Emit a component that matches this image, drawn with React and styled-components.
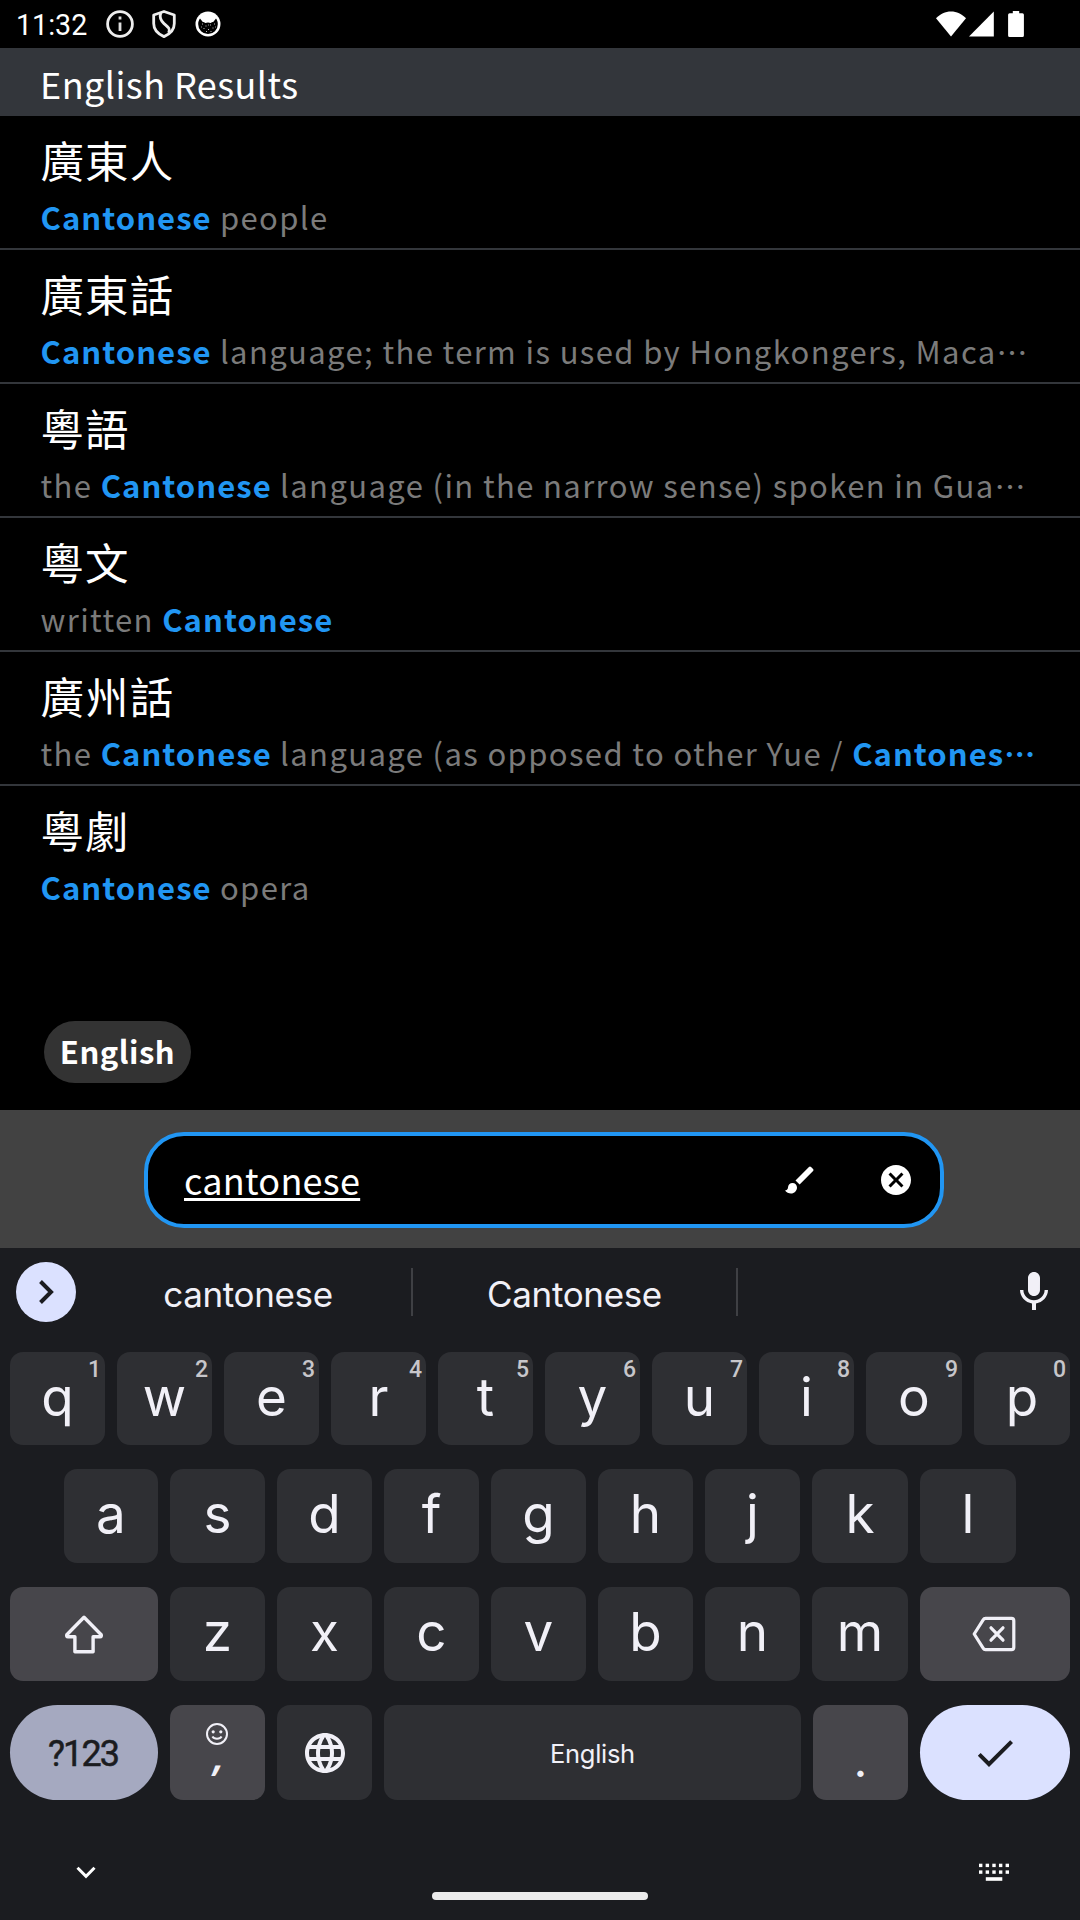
import React from "react";
import styled, { createGlobalStyle, css } from "styled-components";
import { MdBrush, MdCancel, MdLanguage, MdCheck, MdMic } from "react-icons/md";

const cjk = `"Noto Sans CJK TC", "Noto Sans", sans-serif`;
const latin = `Inter, Roboto, sans-serif`;

const color = {
  accent: "#2196f3",
  header: "#33363b",
  muted: "#7b7b7b",
  bar: "#424242",
  board: "#1b1c20",
  key: "#2e2f33",
  keyAlt: "#47464b",
  keyDim: "#a5a9c0",
  keyBright: "#dbe1ff",
  ink: "#f1f0f7",
};

const GlobalStyle = createGlobalStyle`
  * { box-sizing: border-box; }
  body { margin: 0; background: #000; }
`;

const Screen = styled.main`
  display: flex;
  flex-direction: column;
  width: 1080px;
  height: 1920px;
  overflow: hidden;
  background: #000;
  color: #fff;
  font-family: ${cjk};
`;

/* ---------- status bar ---------- */

const StatusBar = styled.header`
  display: flex;
  align-items: center;
  justify-content: space-between;
  height: 48px;
  padding: 0 56px 0 16px;
`;

const StatusGroup = styled.div`
  display: flex;
  align-items: center;
`;

const Clock = styled.time`
  padding-top: 2px;
  margin-right: 19px;
  font: 400 28.6px/32px Roboto, sans-serif;
`;

const StatusIcon = styled.svg`
  display: block;
  width: ${(p) => p.$w}px;
  height: ${(p) => p.$h}px;
  margin-right: ${(p) => p.$gap || 0}px;
`;

/* ---------- results ---------- */

const SectionHeader = styled.h1`
  display: flex;
  align-items: center;
  height: 68px;
  margin: 0;
  padding: 1px 40px 0;
  background: ${color.header};
  font-size: 36px;
  font-weight: 400;
  letter-spacing: 0.45px;
`;

const Results = styled.ul`
  flex: 1;
  margin: 0;
  padding: 0;
  list-style: none;
`;

const Result = styled.li`
  height: 134px;
  padding: 11px 0 0 40.5px;
  border-bottom: 2px solid ${color.header};
  white-space: nowrap;

  &:last-child {
    border-bottom-color: transparent;
  }
`;

const Headword = styled.div`
  font-size: 43.5px;
  line-height: 65px;
  letter-spacing: 1.1px;
`;

const Definition = styled.div`
  margin-top: 2px;
  color: ${color.muted};
  font-size: 31px;
  line-height: 46px;
  letter-spacing: 1.38px;
`;

const Match = styled.b`
  color: ${color.accent};
  font-weight: 700;
  letter-spacing: 1.05px;
`;

const Filters = styled.div`
  display: flex;
  padding: 0 44px 27px;
`;

const Chip = styled.span`
  display: flex;
  align-items: center;
  justify-content: center;
  width: 147px;
  height: 62px;
  padding-bottom: 4px;
  border-radius: 31px;
  background: #333;
  font-size: 31px;
  font-weight: 700;
  letter-spacing: 0.5px;
`;

/* ---------- search ---------- */

const SearchBar = styled.div`
  display: flex;
  height: 138px;
  padding: 22px 136px 20px 144px;
  background: ${color.bar};
`;

const SearchField = styled.div`
  display: flex;
  align-items: center;
  flex: 1;
  padding: 0 26px 0 36px;
  border: 4px solid ${color.accent};
  border-radius: 40px;
  background: #000;
`;

const Query = styled.span`
  flex: 1;
  padding-bottom: 3px;
  font-size: 36px;
  letter-spacing: 0.27px;
`;

const Composing = styled.span`
  text-decoration: underline;
  text-decoration-thickness: 3px;
  text-underline-offset: 3px;
  text-decoration-skip-ink: none;
`;

const FieldActions = styled.div`
  display: flex;
  gap: 60px;
  font-size: 36px;

  svg { display: block; }
`;

/* ---------- keyboard ---------- */

const Keyboard = styled.section`
  display: flex;
  flex-direction: column;
  height: 672px;
  background: ${color.board};
  color: ${color.ink};
  font-family: ${latin};
`;

const SuggestionStrip = styled.div`
  display: grid;
  grid-template-columns: 69px 328px 325px 1fr 48px;
  align-items: center;
  height: 88px;
  padding: 0 22px 0 16px;
`;

const ExpandButton = styled.div`
  display: flex;
  align-items: center;
  justify-content: center;
  width: 60px;
  height: 60px;
  border-radius: 50%;
  background: ${color.keyBright};
`;

const Suggestion = styled.div`
  height: 48px;
  border-right: 2px solid #3f4044;
  padding-top: 1px;
  font-size: 35px;
  line-height: 50px;
  letter-spacing: -0.35px;
  text-align: center;
`;

const MicSlot = styled.div`
  grid-column: 5;
  font-size: 48px;

  svg { display: block; }
`;

const Rows = styled.div`
  display: flex;
  flex-direction: column;
  gap: 24px;
  padding: 16px 10px 0;
`;

const Row = styled.div`
  display: flex;
  gap: 12px;
  height: ${(p) => p.$h}px;
  padding: 0 ${(p) => p.$inset || 0}px;
`;

const tones = {
  normal: css`background: ${color.key};`,
  alt: css`background: ${color.keyAlt};`,
  dim: css`background: ${color.keyDim}; color: #1b1c20;`,
  bright: css`background: ${color.keyBright}; color: #1b1c20;`,
};

const Key = styled.div`
  position: relative;
  display: flex;
  align-items: ${(p) => (p.$letter ? "flex-start" : "center")};
  justify-content: center;
  ${(p) => (p.$width ? `flex: 0 0 ${p.$width}px;` : "flex: 1 1 0;")}
  padding-top: ${(p) => (p.$letter ? 13 : 0)}px;
  border-radius: ${(p) => (p.$pill ? 48 : 13)}px;
  font-size: 53px;
  line-height: 64px;
  ${(p) => tones[p.$tone || "normal"]}

  svg { display: block; }
`;

const Hint = styled.sup`
  position: absolute;
  top: 5px;
  right: 4px;
  color: #c7c6ca;
  font: 500 23px/26px Roboto, sans-serif;
`;

const ModeLabel = styled.span`
  padding: 3px 2px 0 0;
  font: 400 36px/44px Roboto, sans-serif;
  letter-spacing: -1.9px;
  -webkit-text-stroke: 0.5px currentColor;
`;

const SpaceLabel = styled.span`
  padding: 3px 0 0 0;
  font-size: 25.5px;
  line-height: 32px;
  letter-spacing: -0.3px;
`;

const StackedKey = styled(Key)`
  flex-direction: column;
  justify-content: flex-start;
  padding: 17px 1px 0 0;
`;

const Comma = styled.span`
  margin: -14px 0 0 4px;
  font: italic 600 43px/44px "Open Sans", sans-serif;
`;

const Period = styled.span`
  padding-top: 14px;
  font-size: 48px;
  line-height: 50px;
`;

const NavBar = styled.footer`
  display: grid;
  grid-template-columns: 356px 216px 1fr;
  height: 120px;
  padding: 0 71px 0 76px;
`;

const NavIcon = styled.svg`
  display: block;
  margin-top: ${(p) => p.$top}px;
  justify-self: ${(p) => p.$side};
`;

const HomePill = styled.div`
  height: 8px;
  margin-top: 92px;
  border-radius: 4px;
  background: #ececec;
`;

/* ---------- icons ---------- */

const InfoIcon = () => (
  <StatusIcon $w={28} $h={28} $gap={18} viewBox="0 0 28 28">
    <circle cx="14" cy="14" r="12.4" fill="none" stroke="#eee" strokeWidth="2.8" />
    <path d="M14 6.600v3M14 12.400v8.600" stroke="#ddd" strokeWidth="2.8" />
  </StatusIcon>
);

const ShieldIcon = () => (
  <StatusIcon $w={24} $h={28} $gap={19} viewBox="0 0 24 28" fill="none" stroke="#eee" strokeWidth="2.8" strokeLinejoin="round">
    <path d="M12 1.500 22.300 5v8.600c0 5.600-4 10.400-10.300 13C5.700 24 1.700 19.200 1.700 13.600V5z" />
    <path d="M8.800 2.800C7.200 7.500 8.200 10.200 12 13.600s6.800 5 4.600 9.200" />
  </StatusIcon>
);

const CatIcon = () => (
  <StatusIcon $w={26} $h={26} viewBox="0 0 26 26">
    <circle cx="13" cy="13" r="12.5" fill="#fff" />
    <path
      d="M5 7.600 8 11.200c1.200-.5 1.600.7 2.400.7s1.600-.5 2.600-.5 1.800.5 2.600.5 1.200-1.200 2.400-.7L21 7.600c1.200 1.600 1.900 3.600 1.800 5.600A9.800 9.800 0 0 1 3.200 13.200C3.100 11.200 3.800 9.200 5 7.600z"
      fill="#000"
    />
    <path
      d="M7 13h1M10.500 15h1M15 14h1M19 13h1M8.500 17.500h1M13 18.500h1M17.500 17h1M11 20.500h1M15.500 20.500h1M13 14h.8M6 16h.8M20 16h.8"
      stroke="#bbb"
      strokeWidth="1"
    />
  </StatusIcon>
);

const WifiIcon = () => (
  <StatusIcon $w={30} $h={26} $gap={3} viewBox="0 0 30 26">
    <path d="M0 7.200C4.200 3 9.300.4 15 .4S25.800 3 30 7.200L15 25.400z" fill="#fff" />
  </StatusIcon>
);

const SignalIcon = () => (
  <StatusIcon $w={25} $h={26} $gap={14} viewBox="0 0 25 26">
    <path d="M0 25.600 24.800.6v25z" fill="#fff" />
  </StatusIcon>
);

const BatteryIcon = () => (
  <StatusIcon $w={16} $h={26} viewBox="0 0 16 26">
    <path d="M4.800 0h6.400v2.300h3.200q1.500 0 1.500 1.500v20.600q0 1.500-1.500 1.500H1.600q-1.500 0-1.500-1.500V3.800q0-1.500 1.500-1.500h3.200z" fill="#fff" />
  </StatusIcon>
);

const ShiftIcon = () => (
  <svg width="40" height="40" viewBox="0 0 40 40" fill="none" stroke={color.ink} strokeWidth="3.4" strokeLinejoin="round">
    <path d="M20 3.200 2.800 20.800Q2.200 22.800 4 22.800h6.900v15h18.200v-15H36Q37.800 22.800 37.200 20.800z" />
  </svg>
);

const BackspaceIcon = () => (
  <svg width="46" height="36" viewBox="0 0 46 36" fill="none" stroke={color.ink} strokeWidth="3.2" strokeLinejoin="round" strokeLinecap="round">
    <path d="M13.500 2.400H39.500q2.300 0 2.300 2.300V31.300q0 2.300-2.300 2.300H13.500q-1.500 0-2.200-1.200L2.200 18l9.100-14.400q.7-1.200 2.200-1.200z" />
    <path d="m19 11.800 12 12.400M31 11.800 19 24.200" />
  </svg>
);

const SmileyIcon = () => (
  <svg width="24" height="24" viewBox="0 0 24 24" fill="none" stroke={color.ink} strokeWidth="2">
    <circle cx="12" cy="12" r="10" />
    <path d="M7.400 14.400c1.800 3 7.400 3 9.200 0" />
    <circle cx="8.200" cy="9.800" r="1.600" fill={color.ink} stroke="none" />
    <circle cx="15.800" cy="9.800" r="1.600" fill={color.ink} stroke="none" />
  </svg>
);

/* ---------- data ---------- */

const entries = [
  { word: "廣東人", parts: ["*Cantonese", " people"] },
  { word: "廣東話", parts: ["*Cantonese", " language; the term is used by Hongkongers, Maca…"] },
  { word: "粵語", parts: ["the ", "*Cantonese", " language (in the narrow sense) spoken in Gua…"] },
  { word: "粵文", parts: ["written ", "*Cantonese"] },
  { word: "廣州話", parts: ["the ", "*Cantonese", " language (as opposed to other Yue / ", "*Cantones…"] },
  { word: "粵劇", parts: ["*Cantonese", " opera"] },
];

/* Keys are 95px wide; the last `wide` keys of a row take one extra pixel. */
const Letters = ({ keys, hints, wide = 0, first = 95 }) =>
  [...keys].map((k, i) => (
    <Key key={k} $letter $width={i === 0 ? first : i >= keys.length - wide ? 96 : 95}>
      {k}
      {hints && <Hint>{hints[i]}</Hint>}
    </Key>
  ));

export default function App() {
  return (
    <>
      <GlobalStyle />
      <Screen lang="zh-Hant">
        <StatusBar>
          <StatusGroup>
            <Clock>11:32</Clock>
            <InfoIcon />
            <ShieldIcon />
            <CatIcon />
          </StatusGroup>
          <StatusGroup>
            <WifiIcon />
            <SignalIcon />
            <BatteryIcon />
          </StatusGroup>
        </StatusBar>

        <SectionHeader>English Results</SectionHeader>
        <Results>
          {entries.map(({ word, parts }) => (
            <Result key={word}>
              <Headword>{word}</Headword>
              <Definition>
                {parts.map((part, i) =>
                  part[0] === "*" ? <Match key={i}>{part.slice(1)}</Match> : <span key={i}>{part}</span>
                )}
              </Definition>
            </Result>
          ))}
        </Results>
        <Filters>
          <Chip>English</Chip>
        </Filters>

        <SearchBar>
          <SearchField>
            <Query>
              <Composing>cantonese</Composing>
            </Query>
            <FieldActions>
              <MdBrush />
              <MdCancel />
            </FieldActions>
          </SearchField>
        </SearchBar>

        <Keyboard>
          <SuggestionStrip>
            <ExpandButton>
              <svg width="18" height="26" viewBox="0 0 18 26" fill="none" stroke="#1b1c20" strokeWidth="4">
                <path d="M3.500 2.500 14 13 3.500 23.500" />
              </svg>
            </ExpandButton>
            <Suggestion>cantonese</Suggestion>
            <Suggestion>Cantonese</Suggestion>
            <MicSlot>
              <MdMic />
            </MicSlot>
          </SuggestionStrip>

          <Rows>
            <Row $h={93}>
              <Letters keys="qwertyuiop" hints="1234567890" wide={2} />
            </Row>
            <Row $h={94} $inset={54}>
              <Letters keys="asdfghjkl" first={94} wide={2} />
            </Row>
            <Row $h={94}>
              <Key $tone="alt" $width={148}>
                <ShiftIcon />
              </Key>
              <Letters keys="zxcvbnm" wide={1} />
              <Key $tone="alt" $width={150}>
                <BackspaceIcon />
              </Key>
            </Row>
            <Row $h={95}>
              <Key $tone="dim" $width={148} $pill>
                <ModeLabel>?123</ModeLabel>
              </Key>
              <StackedKey $tone="alt" $width={95}>
                <SmileyIcon />
                <Comma>,</Comma>
              </StackedKey>
              <Key $width={95}>
                <MdLanguage size={48} />
              </Key>
              <Key>
                <SpaceLabel>English</SpaceLabel>
              </Key>
              <Key $tone="alt" $width={95}>
                <Period>.</Period>
              </Key>
              <Key $tone="bright" $width={150} $pill>
                <MdCheck size={48} />
              </Key>
            </Row>
          </Rows>

          <NavBar>
            <NavIcon $top={66} $side="start" width="20" height="14" viewBox="0 0 20 14" fill="none" stroke="#fff" strokeWidth="3">
              <path d="M1.500 1.800 10 10.300l8.500-8.500" />
            </NavIcon>
            <HomePill />
            <NavIcon $top={63} $side="end" width="30" height="19" viewBox="0 0 30 19" fill="#fff">
              {[0, 1, 2, 3, 4].map((c) => (
                <g key={c}>
                  <rect x={c * 6.65} y="0.7" width="3.4" height="3.4" />
                  <rect x={c * 6.65} y="7.4" width="3.4" height="3.4" />
                </g>
              ))}
              <rect x="6.8" y="14.2" width="16.5" height="3.6" />
            </NavIcon>
          </NavBar>
        </Keyboard>
      </Screen>
    </>
  );
}
